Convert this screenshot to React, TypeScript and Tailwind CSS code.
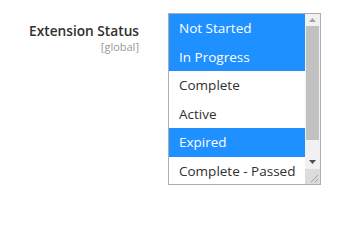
const OPTIONS = [
  { label: "Not Started", selected: true },
  { label: "In Progress", selected: true },
  { label: "Complete", selected: false },
  { label: "Active", selected: false },
  { label: "Expired", selected: true },
  { label: "Complete - Passed", selected: false },
];

function Scrollbar() {
  return (
    <div className="flex w-[15px] shrink-0 flex-col bg-[#f1f1f1]">
      <div className="flex h-[12px] items-center justify-center">
        <svg width="7" height="4" viewBox="0 0 7 4" aria-hidden="true">
          <path d="M0 4 L3.5 0 L7 4 Z" fill="#a3a3a3" />
        </svg>
      </div>
      <div className="mx-[1px] h-[114px] bg-[#c1c1c1]" />
      <div className="flex-1" />
      <div className="flex h-[14px] items-center justify-center">
        <svg width="7" height="4" viewBox="0 0 7 4" aria-hidden="true">
          <path d="M0 0 L7 0 L3.5 4 Z" fill="#505050" />
        </svg>
      </div>
      <div className="relative h-[15px] bg-[#dcdcdc]">
        <svg
          className="absolute right-[2px] bottom-[2px]"
          width="8"
          height="8"
          viewBox="0 0 8 8"
          aria-hidden="true"
        >
          <path d="M8 1 L1 8 M8 5 L5 8" stroke="#a0a0a0" strokeWidth="1" />
        </svg>
      </div>
    </div>
  );
}

export default function App() {
  return (
    <div className="flex h-[200px] w-[344px] bg-white pt-[13px] font-['Open_Sans',sans-serif]">
      <div className="flex w-[139px] shrink-0 flex-col items-end pt-[9px]">
        <span className="text-[13.7px] leading-[18px] font-semibold text-[#303030]">
          Extension Status
        </span>
        <span className="text-[11px] leading-[14px] text-[#999999]">[global]</span>
      </div>
      <div className="ml-[29px] flex h-[172px] w-[153px] overflow-hidden border border-[#adadad]">
        <ul className="flex-1 overflow-hidden">
          {OPTIONS.map((o) => (
            <li
              key={o.label}
              className={
                o.selected
                  ? "h-[28.5px] truncate bg-[#1e90ff] pl-[10px] text-[13.5px] leading-[28.5px] text-white"
                  : "h-[28.5px] truncate pl-[10px] text-[13.5px] leading-[28.5px] text-[#303030]"
              }
            >
              {o.label}
            </li>
          ))}
        </ul>
        <Scrollbar />
      </div>
    </div>
  );
}
